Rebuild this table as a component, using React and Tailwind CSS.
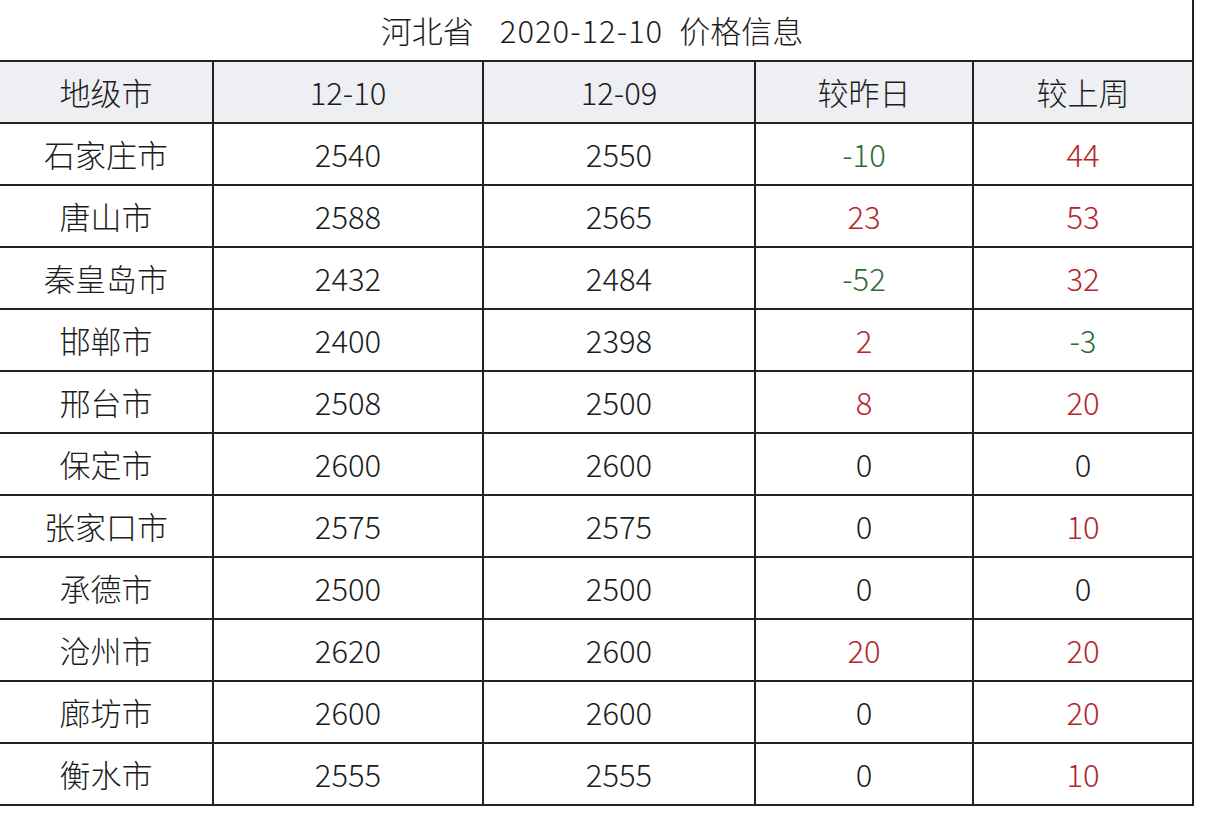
import React from "react";

const G = "text-[#2f6b35]";
const R = "text-[#b3262b]";
const K = "text-[#1c1c1c]";

const rows = [
  ["石家庄市", "2540", "2550", ["-10", G], ["44", R]],
  ["唐山市", "2588", "2565", ["23", R], ["53", R]],
  ["秦皇岛市", "2432", "2484", ["-52", G], ["32", R]],
  ["邯郸市", "2400", "2398", ["2", R], ["-3", G]],
  ["邢台市", "2508", "2500", ["8", R], ["20", R]],
  ["保定市", "2600", "2600", ["0", K], ["0", K]],
  ["张家口市", "2575", "2575", ["0", K], ["10", R]],
  ["承德市", "2500", "2500", ["0", K], ["0", K]],
  ["沧州市", "2620", "2600", ["20", R], ["20", R]],
  ["廊坊市", "2600", "2600", ["0", K], ["20", R]],
  ["衡水市", "2555", "2555", ["0", K], ["10", R]],
];

const cols = "grid grid-cols-[212px_270px_272px_218px_222px]";

function Cell({ children, first, last, bottom, color = K, head }) {
  return (
    <div
      className={
        "h-[62px] border-t-2 border-[#222] flex items-center justify-center text-[31px] leading-none " +
        (first ? "" : "border-l-2 ") +
        (last ? "border-r-2 " : "") +
        (bottom ? "h-[64px] border-b-2 " : "") +
        (head ? "bg-[#eeeff3] " : "bg-white ") +
        color
      }
    >
      <span className="relative -top-[1px]">{children}</span>
    </div>
  );
}

export default function App() {
  return (
    <div
      className="w-[1208px] h-[818px] bg-white overflow-hidden"
      style={{ fontFamily: '"Noto Sans CJK SC", sans-serif' }}
    >
      <div className="w-[1194px] font-light">
        <div className="h-[60px] border-r-2 border-[#222] flex items-center justify-center text-[31px] text-[#1c1c1c] leading-none">
          <span className="relative -top-[1px] -left-[4px] flex">
            <span>河北省</span>
            <span className="ml-[26px] tracking-[1px]">2020-12-10</span>
            <span className="ml-[16px]">价格信息</span>
          </span>
        </div>
        <div className={cols}>
          <Cell first head>地级市</Cell>
          <Cell head>12-10</Cell>
          <Cell head>12-09</Cell>
          <Cell head>较昨日</Cell>
          <Cell head last>较上周</Cell>
        </div>
        {rows.map((r, i) => {
          const b = i === rows.length - 1;
          return (
            <div className={cols} key={r[0]}>
              <Cell first bottom={b}>{r[0]}</Cell>
              <Cell bottom={b}>{r[1]}</Cell>
              <Cell bottom={b}>{r[2]}</Cell>
              <Cell bottom={b} color={r[3][1]}>{r[3][0]}</Cell>
              <Cell bottom={b} last color={r[4][1]}>{r[4][0]}</Cell>
            </div>
          );
        })}
      </div>
    </div>
  );
}
